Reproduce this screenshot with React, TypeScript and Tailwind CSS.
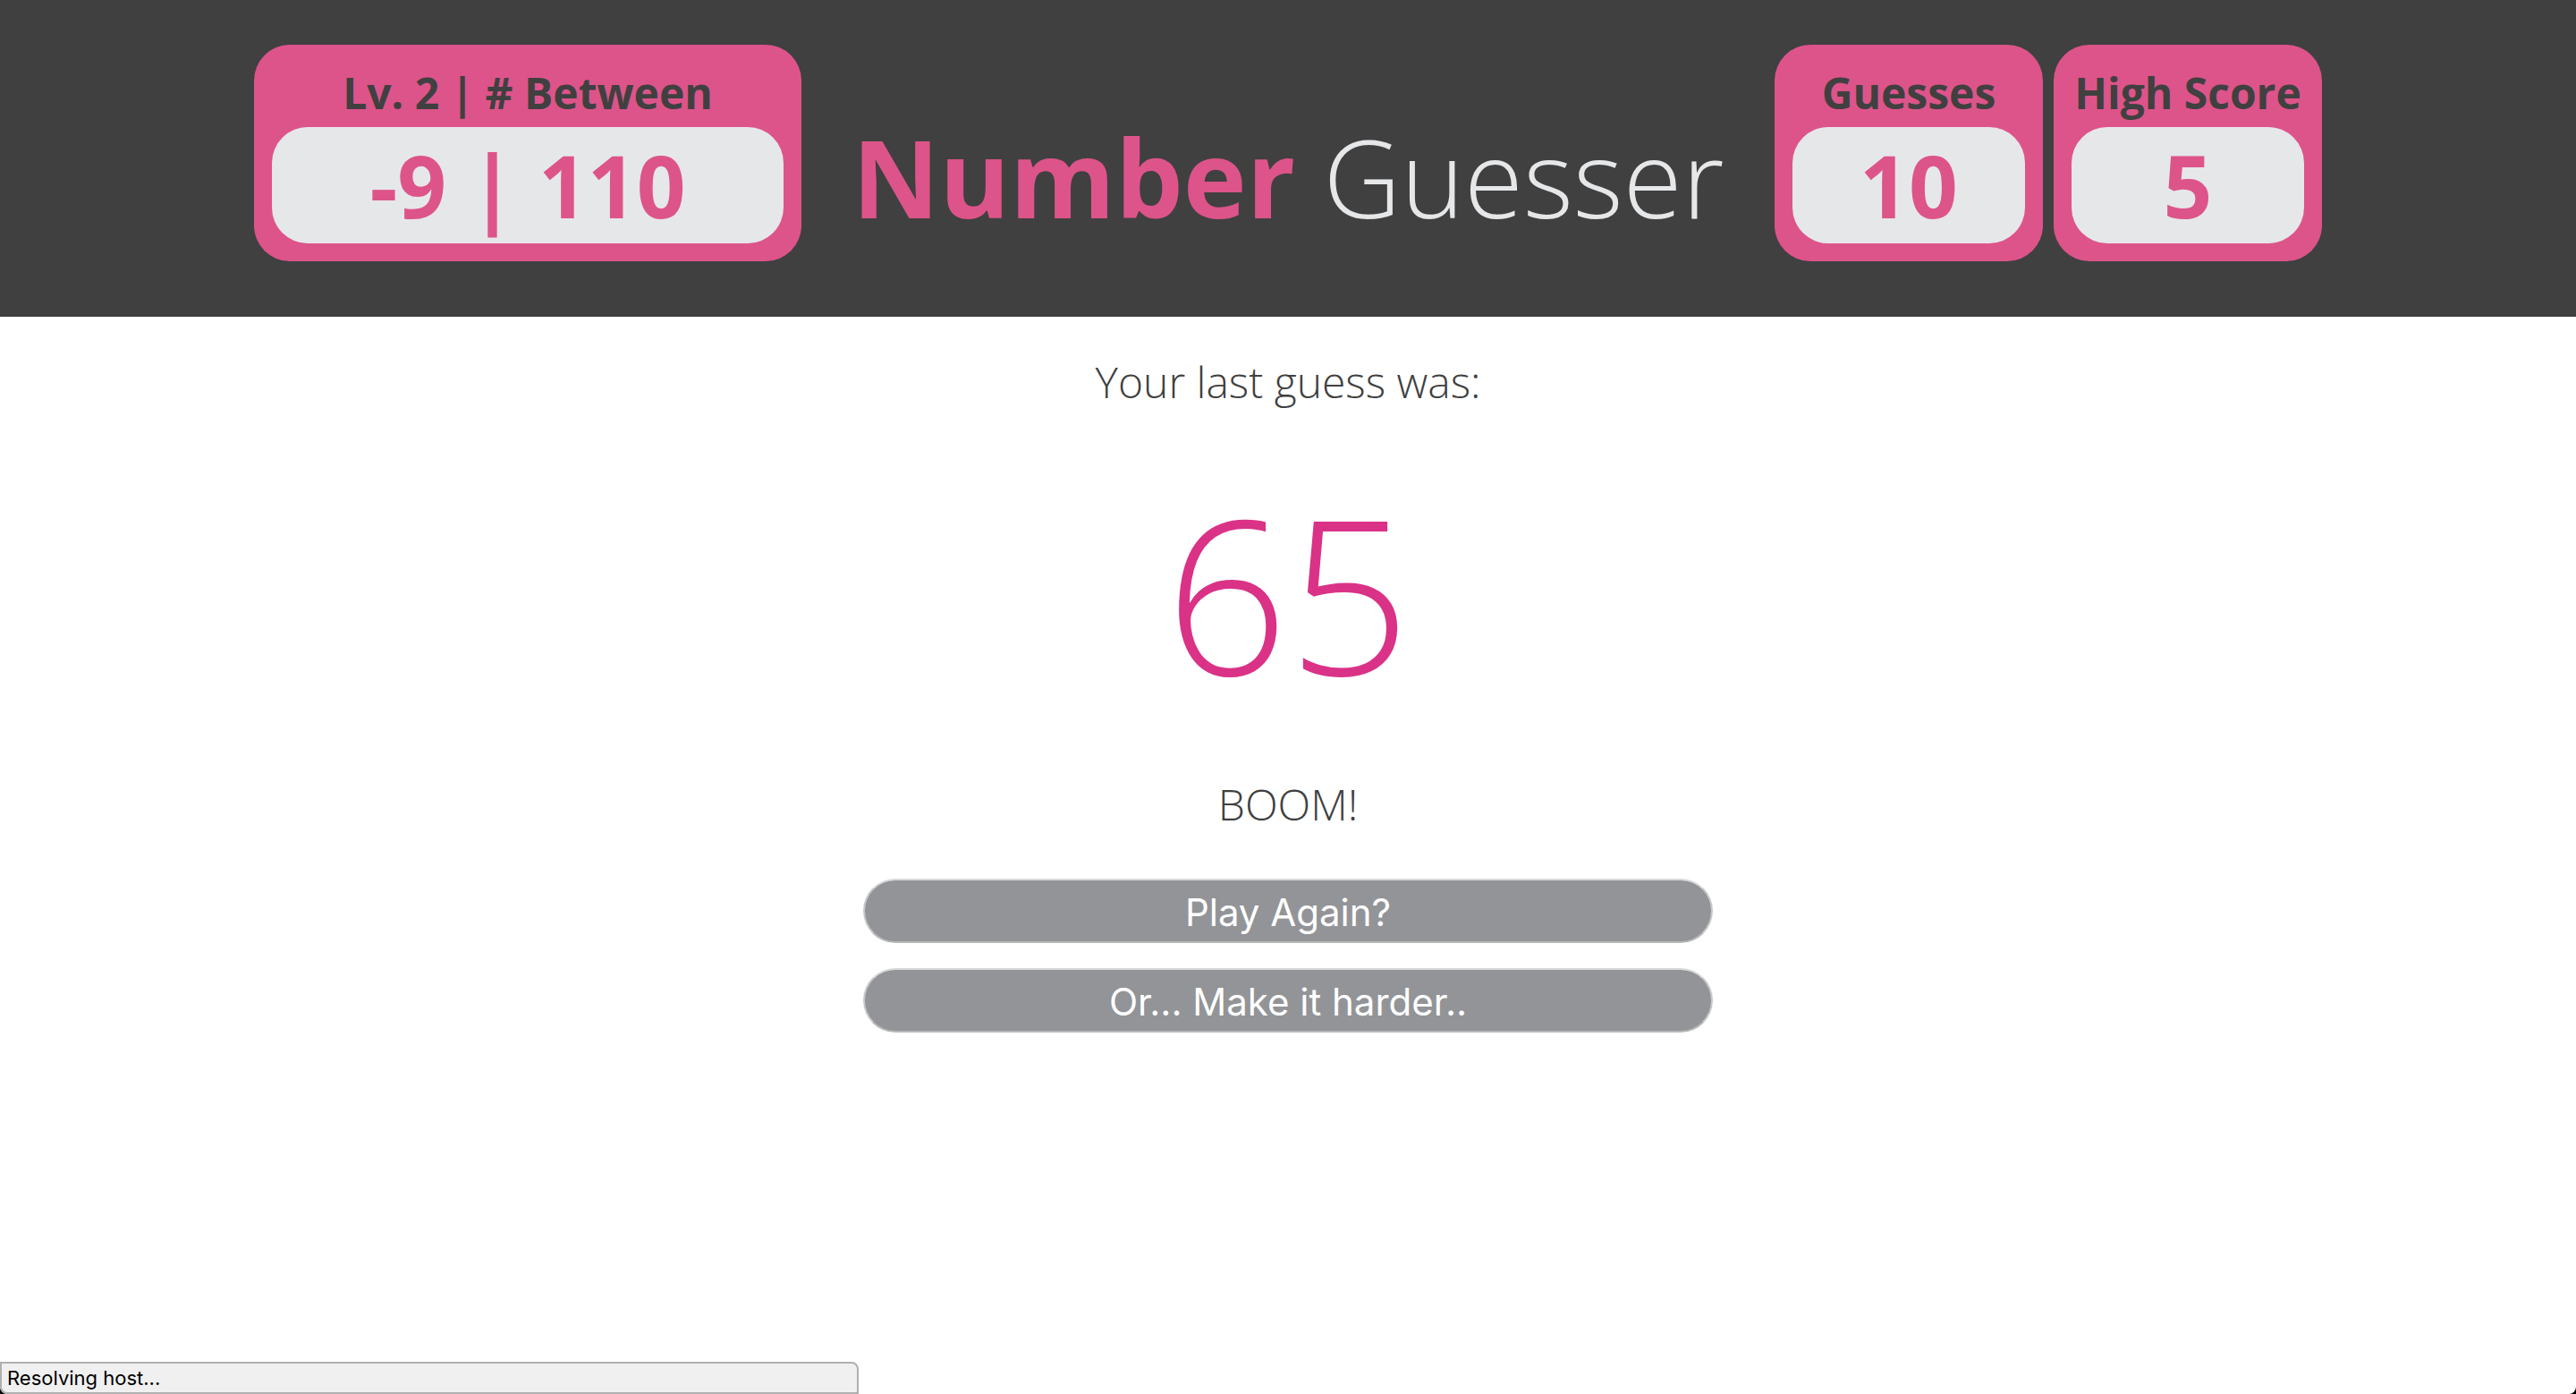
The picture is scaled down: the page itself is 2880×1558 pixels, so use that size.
import React from "react";

function Card({ label, value, wide }: { label: string; value: string; wide?: boolean }) {
  return (
    <section className={`${wide ? "w-[612px]" : "w-[300px]"} rounded-[40px] bg-[#dd548a] px-5 pt-4 pb-5 text-center font-bold`}>
      <h2 className="text-[48px] leading-[76px] whitespace-nowrap text-[#404040]">{label}</h2>
      <p className="rounded-[40px] bg-[#e6e7e9] text-[96px] leading-[130px] text-[#dd548a]">{value}</p>
    </section>
  );
}

function ActionButton({ children }: { children: React.ReactNode }) {
  return (
    <button
      type="button"
      className="h-[72px] rounded-full border-2 border-[#c8c8c8] border-t-[#d8d8d8] border-b-[#b8b8b8] bg-[#929497] pt-1 text-[42px] leading-none text-white"
    >
      {children}
    </button>
  );
}

export default function App() {
  return (
    <div className="bg-black">
      <div className="flex min-h-screen flex-col overflow-hidden rounded-b-[8px] bg-white font-['Open_Sans',sans-serif] text-[#404040]">
        <header className="flex items-start justify-center bg-[#404040] pt-[50px] pb-[62px]">
          <Card label="Lv. 2 | # Between" value="-9 | 110" wide />
          <h1 className="w-[1088px] pt-14 text-center text-[120px] leading-[184px] font-light text-[#e6e7e9]">
            <b className="font-bold text-[#dd548a]">Number</b> Guesser
          </h1>
          <div className="flex gap-3">
            <Card label="Guesses" value="10" />
            <Card label="High Score" value="5" />
          </div>
        </header>
        <main className="flex flex-1 flex-col items-center text-center text-[48px] font-light">
          <p className="mt-9 leading-[74px]">Your last guess was:</p>
          <p className="mt-10 text-[240px] leading-[316px] text-[#da3287]">65</p>
          <p className="mt-11 leading-[70px]">BOOM!</p>
          <div className="mt-12 flex w-[33%] flex-col gap-7 font-['Inter',sans-serif] font-normal">
            <ActionButton>Play Again?</ActionButton>
            <ActionButton>Or... Make it harder..</ActionButton>
          </div>
        </main>
        <footer className="h-9 w-1/3 rounded-tr-lg rounded-bl-lg border-2 border-[#b0b0b0] bg-[#f0f0f0] px-1.5 font-['Inter',sans-serif] text-[22px] leading-8 text-black">
          Resolving host...
        </footer>
      </div>
    </div>
  );
}
